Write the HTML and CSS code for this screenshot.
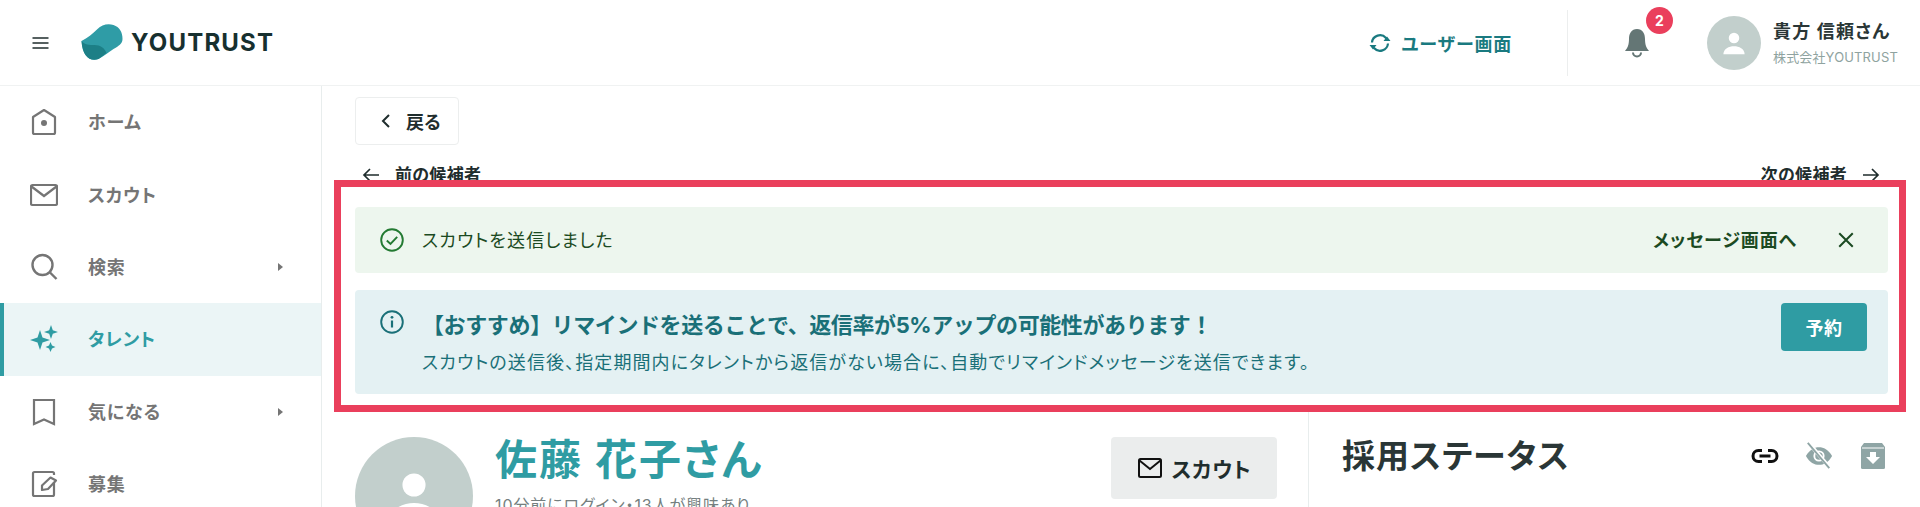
FILE: index.html
```html
<!DOCTYPE html>
<html lang="ja">
<head>
    <meta charset="utf-8">
    <title>YOUTRUST</title>
    <link rel="stylesheet" href="styles.css">
</head>
<body>
    <header class="topbar">
        <svg class="menu-icon" viewBox="0 0 16 12"><path d="M0 1h16M0 6h16M0 11h16" fill="none" stroke="#1f2d2d" stroke-width="1.5"/></svg>
        <div class="logo">
            <svg class="logo-mark" viewBox="0 0 42 37">
                <path d="M0 17C6 14 11 10 16 5C20 1 26-1 32 1C38 3 41 8 41 15C41 20 37 22 32 25C27 28 23 32 17 35C9 38 1 33 0 17Z" fill="#2f9ca6"/>
                <path d="M0 17C3 21 8 21 13 21C19 21 23 24 25 29C22 31 20 33 17 35C9 38 1 33 0 17Z" fill="#1c7f86"/>
            </svg>
            <span class="logo-text">YOUTRUST</span>
        </div>
        <div class="switch-link">
            <svg class="switch-icon" viewBox="0 0 24 24"><path d="M4 11.500A8 8 0 0 1 18 7l1.500 2M20 12.500A8 8 0 0 1 6 17l-1.500-2" fill="none" stroke="#1a7a80" stroke-width="2.200"/><path d="M15.500 10h7l-3.500-4.500zM1.500 14h7l-3.500 4.500z" fill="#1a7a80"/></svg>
            <span>ユーザー画面</span>
        </div>
        <div class="bell">
            <svg class="bell-icon" viewBox="0 0 26 30"><path d="M13 1C7.500 1 5 5.500 5 11C5 17 3.500 20 1 23H25C22.500 20 21 17 21 11C21 5.500 18.500 1 13 1Z" fill="#647675"/><path d="M9 24.500a4 4 0 0 0 8 0" fill="none" stroke="#647675" stroke-width="2"/></svg>
            <span class="badge">2</span>
        </div>
        <div class="account">
            <div class="avatar avatar-small">
                <svg viewBox="0 0 24 24"><circle cx="12" cy="8" r="4.200"/><path d="M3.500 21C3.500 16.500 8 14.500 12 14.500S20.500 16.500 20.500 21Z"/></svg>
            </div>
            <div>
                <div class="account-name">貴方 信頼さん</div>
                <div class="account-company">株式会社YOUTRUST</div>
            </div>
        </div>
    </header>

    <div class="page">
        <nav class="sidebar">
            <a class="nav-item">
                <svg class="nav-icon" viewBox="0 0 28 28"><path d="M14 2L25 9V24.500Q25 26 23.500 26H4.500Q3 26 3 24.500V9Z" fill="none" stroke="#757575" stroke-width="2.200" stroke-linejoin="round"/><circle cx="14" cy="15" r="3" fill="#757575"/></svg>
                <span>ホーム</span>
            </a>
            <a class="nav-item">
                <svg class="nav-icon" viewBox="0 0 28 28"><rect x="1" y="4" width="26" height="20" rx="1.500" fill="none" stroke="#757575" stroke-width="2.200"/><path d="M1.500 5.500L14 15L26.500 5.500" fill="none" stroke="#757575" stroke-width="2.200"/></svg>
                <span>スカウト</span>
            </a>
            <a class="nav-item">
                <svg class="nav-icon" viewBox="0 0 28 28"><circle cx="12.500" cy="12" r="10" fill="none" stroke="#757575" stroke-width="2.400"/><path d="M20 19.500L26.500 26" stroke="#757575" stroke-width="2.400"/></svg>
                <span>検索</span>
                <i class="caret"></i>
            </a>
            <a class="nav-item nav-item-active">
                <svg class="nav-icon" viewBox="0 0 28 28"><path d="M10 5L12.500 12.500L20 15L12.500 17.500L10 25L7.500 17.500L0 15L7.500 12.500Z" fill="#2f9ca3"/><path d="M21 0L22.800 5.200L28 7L22.800 8.800L21 14L19.200 8.800L14 7L19.200 5.200Z" fill="#2f9ca3"/><path d="M20.500 17L22 20.500L25.500 22L22 23.500L20.500 27L19 23.500L15.500 22L19 20.500Z" fill="#2f9ca3"/></svg>
                <span>タレント</span>
            </a>
            <a class="nav-item">
                <svg class="nav-icon" viewBox="0 0 28 28"><path d="M4 2H24V26L14 21.500L4 26Z" fill="none" stroke="#757575" stroke-width="2.200"/></svg>
                <span>気になる</span>
                <i class="caret"></i>
            </a>
            <a class="nav-item">
                <svg class="nav-icon" viewBox="0 0 28 28"><path d="M24 12V24.500Q24 26 22.500 26H4.500Q3 26 3 24.500V3.500Q3 2 4.500 2H22.500Q24 2 24 3.500V5" fill="none" stroke="#757575" stroke-width="2.200"/><path d="M12 20V15.500L20.500 7.500L26 10.500L18 19L12 20Z" fill="none" stroke="#757575" stroke-width="2.200" stroke-linejoin="round"/></svg>
                <span>募集</span>
            </a>
        </nav>

        <main class="content">
            <button class="back-button">
                <svg class="back-icon" viewBox="0 0 10 16"><path d="M8 2L2 8L8 14" fill="none" stroke="#1f2d2d" stroke-width="2"/></svg>
                戻る
            </button>
            <div class="pager">
                <span class="pager-link">
                    <svg class="arrow-icon" viewBox="0 0 18 14"><path d="M17 7H2M8 1L2 7L8 13" fill="none" stroke="#1f2d2d" stroke-width="1.700"/></svg>
                    前の候補者
                </span>
                <span class="pager-link">
                    次の候補者
                    <svg class="arrow-icon" viewBox="0 0 18 14"><path d="M1 7H16M10 1L16 7L10 13" fill="none" stroke="#1f2d2d" stroke-width="1.700"/></svg>
                </span>
            </div>

            <section class="highlight">
                <div class="alert alert-success">
                    <svg class="alert-icon" viewBox="0 0 24 24"><circle cx="12" cy="12" r="10.800" fill="none" stroke="#237a32" stroke-width="1.900"/><path d="M6.800 12.500L10.500 16L17.200 8.800" fill="none" stroke="#237a32" stroke-width="1.900"/></svg>
                    <span class="alert-text">スカウトを送信しました</span>
                    <a class="alert-link">メッセージ画面へ</a>
                    <svg class="close-icon" viewBox="0 0 16 16"><path d="M2 2L14 14M14 2L2 14" stroke="#1b4a22" stroke-width="1.800"/></svg>
                </div>
                <div class="alert alert-info">
                    <svg class="alert-icon" viewBox="0 0 24 24"><circle cx="12" cy="12" r="10.800" fill="none" stroke="#1a7078" stroke-width="1.900"/><circle cx="12" cy="7.300" r="1.400" fill="#1a7078"/><path d="M12 10.500V17.500" stroke="#1a7078" stroke-width="2.200"/></svg>
                    <div class="alert-body">
                        <div class="alert-title">【おすすめ】リマインドを送ることで、返信率が5%アップの可能性があります！</div>
                        <div class="alert-desc">スカウトの送信後、指定期間内にタレントから返信がない場合に、自動でリマインドメッセージを送信できます。</div>
                    </div>
                    <button class="reserve-button">予約</button>
                </div>
            </section>

            <section class="candidate">
                <div class="profile">
                    <div class="avatar avatar-large">
                        <svg viewBox="0 0 24 24"><circle cx="12" cy="8" r="4.200"/><path d="M3.500 21C3.500 16.500 8 14.500 12 14.500S20.500 16.500 20.500 21Z"/></svg>
                    </div>
                    <div class="profile-info">
                        <h1 class="profile-name">佐藤 花子さん</h1>
                        <div class="profile-meta">10分前にログイン・13人が興味あり</div>
                    </div>
                    <button class="scout-button">
                        <svg class="scout-icon" viewBox="0 0 26 24"><rect x="2" y="3" width="22" height="18" rx="1.500" fill="none" stroke="#111" stroke-width="2"/><path d="M2.500 4.500L13 13L23.500 4.500" fill="none" stroke="#111" stroke-width="2"/></svg>
                        スカウト
                    </button>
                </div>
                <div class="status">
                    <h2 class="status-title">採用ステータス</h2>
                    <div class="status-icons">
                        <svg class="status-icon" viewBox="0 0 28 16"><path d="M11 2.500H7.500a5.500 5.500 0 0 0 0 11H11M17 2.500h3.500a5.500 5.500 0 0 1 0 11H17M8.500 8h11" fill="none" stroke="#111" stroke-width="3"/></svg>
                        <svg class="status-icon" viewBox="0 0 30 30"><path d="M1 15C5 8 10 5.500 15 5.500S25 8 29 15C25 22 20 24.500 15 24.500S5 22 1 15Z" fill="#8fa5a5"/><circle cx="15" cy="15" r="5" fill="none" stroke="#fff" stroke-width="2"/><path d="M4 1L27 28" stroke="#fff" stroke-width="4"/><path d="M3 1L26 28" stroke="#8fa5a5" stroke-width="2"/></svg>
                        <svg class="status-icon" viewBox="0 0 26 28"><path d="M4 1H22L25 5V25.500Q25 27 23.500 27H2.500Q1 27 1 25.500V5Z" fill="#8fa5a5"/><path d="M2 6H24" stroke="#fff" stroke-width="1"/><path d="M10 10H16V15H20L13 22L6 15H10Z" fill="#fff"/></svg>
                    </div>
                </div>
            </section>
        </main>
    </div>
</body>
</html>
```

FILE: styles.css
```css
* {
    box-sizing: border-box;
}

html, body {
    height: 507px;
    margin: 0;
    overflow: hidden;
}

body {
    font-family: Inter, "Noto Sans CJK JP", "Noto Sans", sans-serif;
    font-feature-settings: "palt";
    color: #1f2d2d;
    background: white;
}

button {
    font-family: inherit;
    font-feature-settings: inherit;
    cursor: pointer;
}

/* top bar */
.topbar {
    display: flex;
    align-items: center;
    height: 86px;
    padding-left: 32px;
    border-bottom: 1px solid #f0f2f2;
}

.menu-icon {
    width: 17px;
    height: 12px;
}

.logo {
    display: flex;
    align-items: center;
    margin-left: 32px;
}

.logo-mark {
    width: 43px;
    height: 37px;
}

.logo-text {
    margin-left: 7px;
    font-size: 24px;
    font-weight: 700;
    letter-spacing: 1.2px;
    color: #17302f;
}

.switch-link {
    display: flex;
    align-items: center;
    margin-left: auto;
    font-size: 18px;
    font-weight: 700;
    letter-spacing: .8px;
    color: #1a7a80;
}

.switch-icon {
    width: 24px;
    height: 24px;
    margin-right: 10px;
}

.bell {
    position: relative;
    display: flex;
    justify-content: center;
    width: 140px;
    margin-left: 55px;
    padding: 0 1px 0 0;
    border-left: 1px solid #eceeee;
    height: 66px;
    align-items: center;
}

.bell-icon {
    width: 26px;
    height: 30px;
}

.badge {
    position: absolute;
    top: -3px;
    left: 78px;
    width: 27px;
    height: 27px;
    border-radius: 50%;
    background: #ea3f5c;
    color: white;
    font-size: 14px;
    font-weight: 700;
    line-height: 27px;
    text-align: center;
}

.account {
    display: flex;
    align-items: center;
    width: 213px;
}

.avatar {
    display: flex;
    flex-shrink: 0;
    align-items: center;
    justify-content: center;
    border-radius: 50%;
    background: #c2cfcc;
    fill: white;
}

.avatar-small {
    width: 54px;
    height: 54px;
    margin-right: 12px;
}

.avatar-small svg {
    width: 30px;
    height: 30px;
}

.account-name {
    font-size: 18px;
    font-weight: 700;
    letter-spacing: 1.2px;
    line-height: 24px;
    color: #2a3636;
}

.account-company {
    margin-top: 4px;
    font-size: 13px;
    letter-spacing: .15px;
    line-height: 18px;
    color: #8fa3a0;
}

/* sidebar */
.page {
    display: flex;
    height: 421px;
    overflow: hidden;
}

.sidebar {
    width: 322px;
    flex-shrink: 0;
    height: 421px;
    border-right: 1px solid #e8eded;
}

.nav-item {
    display: flex;
    align-items: center;
    height: 72.400px;
    padding: 0 38px 0 30px;
    font-size: 18px;
    font-weight: 700;
    letter-spacing: .8px;
    color: #757575;
}

.nav-item span {
    flex: 1;
    margin-top: -2px;
}

.nav-icon {
    width: 28px;
    height: 28px;
    margin-right: 30px;
}

.nav-item-active {
    background: #ebf5f6;
    border-left: 4px solid #2f9ca3;
    padding-left: 26px;
    color: #2f9ca3;
}

.caret {
    width: 0;
    height: 0;
    border-left: 5px solid #757575;
    border-top: 4.500px solid transparent;
    border-bottom: 4.500px solid transparent;
}

/* main column */
.content {
    flex: 1;
    min-width: 0;
    padding: 11px 32px 0 33px;
}

.back-button {
    display: flex;
    align-items: center;
    width: 104px;
    height: 48px;
    padding: 0 0 0 25px;
    border: 1px solid #eceeee;
    border-radius: 4px;
    background: white;
    font-size: 18px;
    font-weight: 700;
    color: #1f2d2d;
}

.back-icon {
    width: 10px;
    height: 16px;
    margin-right: 15px;
}

.pager {
    display: flex;
    justify-content: space-between;
    margin-top: 18px;
    padding: 0 8px 0 7px;
    font-size: 17px;
    font-weight: 700;
    letter-spacing: .3px;
    line-height: 24px;
}

.pager-link {
    display: flex;
    align-items: center;
    gap: 15px;
}

.arrow-icon {
    width: 18px;
    height: 14px;
}

/* annotation frame, sits over the pager row */
.highlight {
    position: relative;
    margin: -7px -18px 0 -21px;
    padding: 20px 11px 11px 14px;
    border: 7px solid #ea3f5c;
    background: white;
}

.alert {
    display: flex;
    border-radius: 4px;
}

.alert-icon {
    width: 24px;
    height: 24px;
    flex-shrink: 0;
}

.alert-success {
    align-items: center;
    height: 66px;
    padding: 0 33px 0 25px;
    background: #edf6ee;
    color: #1b4a22;
}

.alert-text {
    flex: 1;
    margin-left: 18px;
    margin-top: -2px;
    font-size: 18px;
    letter-spacing: 1.1px;
}

.alert-link {
    margin-top: -2px;
    font-size: 18px;
    font-weight: 700;
    letter-spacing: .9px;
}

.close-icon {
    width: 18px;
    height: 18px;
    margin-left: 40px;
}

.alert-info {
    position: relative;
    height: 104px;
    margin-top: 17px;
    padding: 20px 21px 0 25px;
    background: #e4f1f3;
    color: #1a7078;
}

.alert-body {
    flex: 1;
    margin-left: 18px;
}

.alert-title {
    font-size: 22px;
    font-weight: 700;
    font-feature-settings: normal;
    letter-spacing: -.4px;
    line-height: 30px;
}

.alert-desc {
    margin-top: 11px;
    font-size: 18px;
    letter-spacing: 1.1px;
    line-height: 24px;
}

.reserve-button {
    width: 86px;
    height: 48px;
    margin-top: -7px;
    border: none;
    border-radius: 4px;
    background: #2f9ca3;
    color: white;
    font-size: 18px;
    font-weight: 700;
    letter-spacing: .5px;
}

/* candidate section */
.candidate {
    display: flex;
    height: 96px;
    margin: 0 -32px 0 0;
    overflow: hidden;
}

.profile {
    display: flex;
    width: 954px;
    padding: 25px 31px 0 0;
    border-right: 1px solid #e8eded;
}

.avatar-large {
    width: 118px;
    height: 118px;
    margin-right: 22px;
}

.avatar-large svg {
    width: 66px;
    height: 66px;
}

.profile-info {
    flex: 1;
}

.profile-name {
    margin: 0;
    font-size: 42px;
    font-weight: 700;
    letter-spacing: 2px;
    line-height: 46px;
    color: #2f9ca3;
}

.profile-meta {
    margin-top: 12px;
    font-size: 16px;
    letter-spacing: .9px;
    line-height: 20px;
    color: #757f7f;
}

.scout-button {
    display: flex;
    align-items: center;
    justify-content: center;
    width: 166px;
    height: 62px;
    border: none;
    border-radius: 4px;
    background: #ebeded;
    font-size: 21px;
    font-weight: 700;
    letter-spacing: .8px;
    color: #1f2d2d;
}

.scout-icon {
    width: 26px;
    height: 24px;
    margin-right: 9px;
}

.status {
    display: flex;
    flex: 1;
    align-items: flex-start;
    justify-content: space-between;
    padding: 21px 33px 0 33px;
}

.status-title {
    margin: 0;
    font-size: 33px;
    font-weight: 700;
    letter-spacing: 1px;
    line-height: 46px;
    color: #2a3636;
}

.status-icons {
    display: flex;
    align-items: center;
    gap: 26px;
    height: 46px;
}

.status-icon {
    width: 28px;
    height: 28px;
}
```
